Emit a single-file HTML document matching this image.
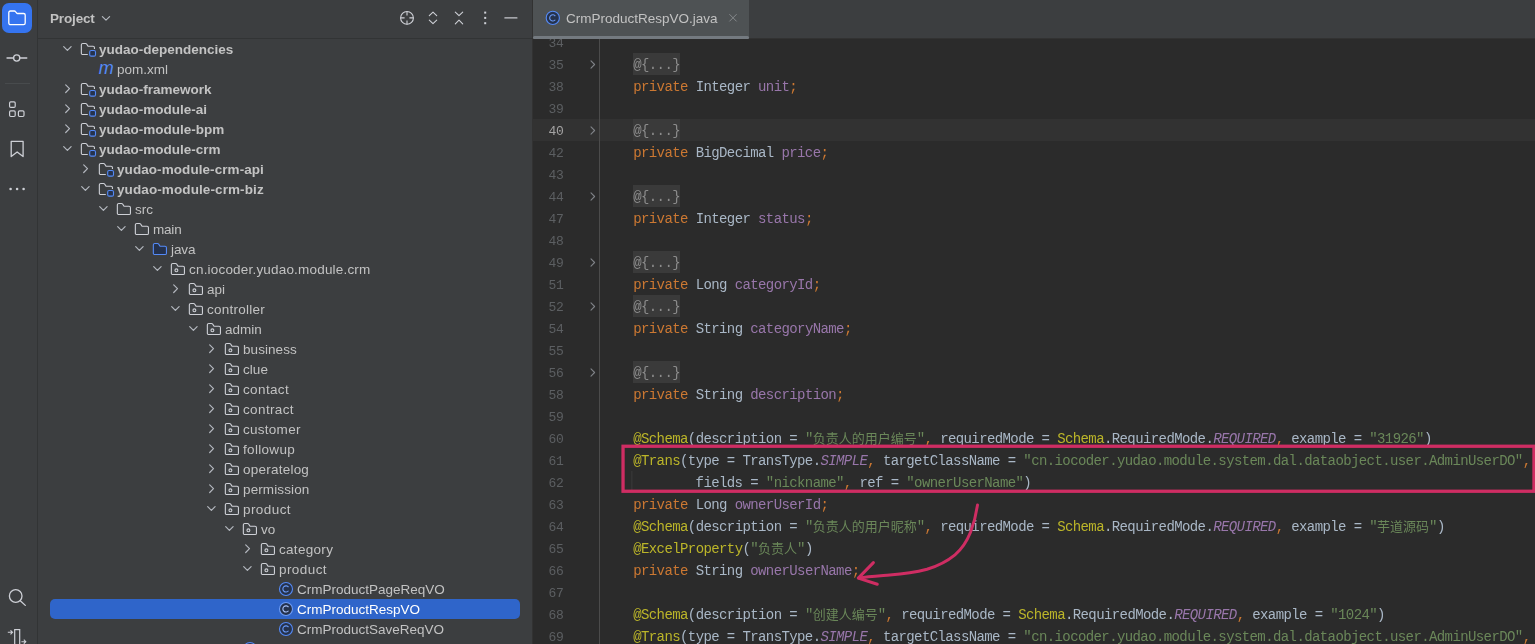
<!DOCTYPE html>
<html lang="zh">
<head>
<meta charset="utf-8">
<title>CrmProductRespVO.java</title>
<style>
*{box-sizing:border-box;margin:0;padding:0}
html,body{width:1535px;height:644px;overflow:hidden;background:#2b2b2b}
body{position:relative;font-family:"Liberation Sans","Noto Sans CJK SC",sans-serif;font-size:13px;color:#bbbbbb}
.abs{position:absolute;line-height:0}
svg{display:block}
#toolbar{position:absolute;left:0;top:0;width:37px;height:644px;background:#3c3e40}
#tbline{position:absolute;left:37px;top:0;width:1px;height:644px;background:#323435}
#panel{position:absolute;left:38px;top:0;width:494px;height:644px;background:#3c3e40}
#pline{position:absolute;left:532px;top:0;width:1px;height:644px;background:#323232}
#phead{position:absolute;left:38px;top:38px;width:494px;height:1px;background:#323435}
#projbtn{position:absolute;left:2px;top:3px;width:30px;height:30px;border-radius:7px;background:#3574f0}
.tt{position:absolute;height:20px;line-height:20px;white-space:pre;font-size:13.500px;color:#c2c2c2;will-change:transform}
.tt.b{font-weight:bold;color:#c3c3c3}
.tt.s{color:#ffffff}
.sel{position:absolute;left:50px;width:470px;height:20px;border-radius:5px;background:#2f65ca}
#title{position:absolute;left:50px;top:9px;letter-spacing:-0.150px;height:20px;line-height:20px;font-weight:bold;font-size:13.500px;color:#c2c2c2;will-change:transform}
#tabbar{position:absolute;left:533px;top:0;width:1002px;height:38px;background:#3c3e40}
#tabbarline{position:absolute;left:533px;top:38px;width:1002px;height:1px;background:#323232}
#tab{position:absolute;left:533px;top:0;width:216px;height:39px;background:#4e5254}
#tabul{position:absolute;left:533px;top:36px;width:216px;height:3px;background:#747a80;border-radius:1.500px}
#tabtxt{position:absolute;left:566px;top:9px;height:20px;line-height:20px;font-size:13.500px;color:#c2c2c2;white-space:pre;will-change:transform}
#editor{position:absolute;left:533px;top:39px;width:1002px;height:605px;background:#2b2b2b;overflow:hidden}
#ed{position:absolute;left:-533px;top:-39px;width:1535px;height:644px}
#gline{position:absolute;left:599px;top:39px;width:1px;height:605px;background:#4b4b4b}
.ln{position:absolute;left:533px;width:30.600px;letter-spacing:-0.300px;height:22px;line-height:22px;text-align:right;font-family:"Liberation Mono",monospace;font-size:13px;color:#5c5f62;will-change:transform}
.ln.cur{color:#a4a3a3}
.cl{position:absolute;left:601.800px;height:22px;line-height:22px;white-space:pre;font-family:"Liberation Mono","Noto Sans CJK SC",monospace;font-size:14px;letter-spacing:-0.600px;color:#a9b7c6;will-change:transform}
.z{font-size:13px;letter-spacing:0}
.foldbg{position:absolute;left:633px;width:47px;height:22px;background:#3a3a3a}
.curline{position:absolute;left:533px;width:1002px;height:22px;background:#323232}
.k{color:#cc7832}.f{color:#9876aa}.s{color:#6a8759}.a{color:#bbb529}.c{color:#cc7832}.i{color:#9876aa;font-style:italic}
.fold{color:#8c8c8c}
#redbox{position:absolute;left:621.100px;top:444.400px;width:914.300px;height:48.300px;border:3px solid #cf2d63}
#guide{position:absolute;left:631.400px;top:471px;width:1px;height:22px;background:#393939}
</style>
</head>
<body>
<div id="toolbar">
  <div id="projbtn"></div>
  <svg class="abs" style="left:7px;top:8px" width="21" height="21" viewBox="0 0 21 21" fill="none"><g transform="translate(0.4 0.3)"><path d="M3 2.700h3.900c.5 0 .9.200 1.200.600l1.200 1.500c.2.300.5.400.9.400h6c.9 0 1.600.7 1.600 1.600v8c0 .9-.7 1.600-1.600 1.600H3c-.9 0-1.600-.7-1.600-1.600V4.300c0-.9.700-1.600 1.600-1.600z" stroke="#ffffff" stroke-width="1.300"/></g></svg>
  <svg class="abs" style="left:6px;top:48px" width="23" height="21" viewBox="0 0 23 21" fill="none"><g transform="translate(0.0 0.0)"><circle cx="10.700" cy="10" r="3.100" stroke="#CED0D6" stroke-width="1.300"/><path d="M1 10h6.500M14 10h6.800" stroke="#CED0D6" stroke-width="1.300" stroke-linecap="round"/></g></svg>
  <div class="abs" style="left:5px;top:83px;width:25px;height:1px;background:#484b4d"></div>
  <svg class="abs" style="left:6px;top:99px" width="23" height="21" viewBox="0 0 23 21" fill="none"><g transform="translate(0.0 0.0)"><rect x="3.600" y="2.800" width="5.600" height="5.600" rx="1.200" stroke="#CED0D6" stroke-width="1.200"/><rect x="3.600" y="11.900" width="5.600" height="5.600" rx="1.200" stroke="#CED0D6" stroke-width="1.200"/><rect x="12.400" y="11.900" width="5.600" height="5.600" rx="1.200" stroke="#CED0D6" stroke-width="1.200"/></g></svg>
  <svg class="abs" style="left:7px;top:139px" width="21" height="21" viewBox="0 0 21 21" fill="none"><g transform="translate(0.0 0.0)"><path d="M4.200 2.300h11.900v15.300l-5.950-4.600-5.950 4.600z" stroke="#CED0D6" stroke-width="1.300" stroke-linejoin="round"/></g></svg>
  <svg class="abs" style="left:7px;top:184px" width="21" height="11" viewBox="0 0 21 11"><g transform="translate(0.0 0.0)"><circle cx="3.600" cy="5" r="1.300" fill="#CED0D6"/><circle cx="10.100" cy="5" r="1.300" fill="#CED0D6"/><circle cx="16.600" cy="5" r="1.300" fill="#CED0D6"/></g></svg>
  <svg class="abs" style="left:6px;top:586px" width="23" height="23" viewBox="0 0 23 23" fill="none"><g transform="translate(0.0 0.0)"><circle cx="9.700" cy="10" r="6.300" stroke="#CED0D6" stroke-width="1.300"/><path d="M14.300 14.700l5 4.700" stroke="#CED0D6" stroke-width="1.300" stroke-linecap="round"/></g></svg>
  <svg class="abs" style="left:6px;top:624px" width="23" height="21" viewBox="0 0 23 21" fill="none"><g transform="translate(0.0 0.0)"><rect x="8.700" y="5.600" width="5" height="16" stroke="#CED0D6" stroke-width="1.200"/><path d="M1.800 8.300h4.500M4.500 6.300l2 2-2 2M15.400 17.700h4.200M17.800 15.700l2 2-2 2" stroke="#CED0D6" stroke-width="1.100"/></g></svg>
</div>
<div id="tbline"></div>
<div id="panel"></div>
<div id="phead"></div>
<div id="pline"></div>
<div id="title">Project</div>
<svg class="abs" style="left:100px;top:12px" width="13" height="13" viewBox="0 0 13 13" fill="none"><g transform="translate(0.0 0.0)"><path d="M2.400 4.600l3.600 3.500 3.600-3.500" stroke="#B4B8BF" stroke-width="1.200" stroke-linecap="round" stroke-linejoin="round"/></g></svg>
<!-- header icons -->
<svg class="abs" style="left:399px;top:10px" width="17" height="17" viewBox="0 0 17 17" fill="none"><g transform="translate(0.0 0.0)"><circle cx="8" cy="7.900" r="6.400" stroke="#CED0D6" stroke-width="1.100"/><path d="M8 1.500v4M8 10.400v4M1.600 7.900h4M10.400 7.900h4" stroke="#CED0D6" stroke-width="1.100"/></g></svg>
<svg class="abs" style="left:425px;top:10px" width="17" height="17" viewBox="0 0 17 17" fill="none"><g transform="translate(0.0 0.0)"><path d="M4.300 5.600l3.700-3.500 3.700 3.500M4.300 10.100l3.700 3.500 3.700-3.500" stroke="#CED0D6" stroke-width="1.100" stroke-linecap="round" stroke-linejoin="round"/></g></svg>
<svg class="abs" style="left:451px;top:10px" width="17" height="17" viewBox="0 0 17 17" fill="none"><g transform="translate(0.0 0.0)"><path d="M4.300 2.100l3.700 3.600 3.700-3.600M4.300 13.800l3.700-3.700 3.700 3.700" stroke="#CED0D6" stroke-width="1.100" stroke-linecap="round" stroke-linejoin="round"/></g></svg>
<svg class="abs" style="left:477px;top:10px" width="17" height="17" viewBox="0 0 17 17"><g transform="translate(0.0 0.0)"><rect x="7.200" y="1.600" width="2" height="2" fill="#CED0D6"/><rect x="7.200" y="6.900" width="2" height="2" fill="#CED0D6"/><rect x="7.200" y="12.200" width="2" height="2" fill="#CED0D6"/></g></svg>
<svg class="abs" style="left:504px;top:17px" width="15" height="3" viewBox="0 0 15 3"><g transform="translate(0.3 0.25)"><rect x="0" y="0" width="13.200" height="1.300" rx="0.500" fill="#c6c8cd"/></g></svg>
<!-- tree -->
<svg class="abs" style="left:61px;top:42px" width="13" height="13" viewBox="0 0 13 13" fill="none"><g transform="translate(0.4 0.7)"><path d="M2.300 3.900l3.700 3.700 3.700-3.700" stroke="#B4B8BF" stroke-width="1.200" stroke-linecap="round" stroke-linejoin="round"/></g></svg><svg class="abs" style="left:79px;top:40px" width="19" height="19" viewBox="0 0 19 19" fill="none"><g transform="translate(0.5 0.7)"><path d="M8.300 13.850H3.250A1.400 1.400 0 0 1 1.850 12.450V4.250A1.400 1.400 0 0 1 3.250 2.850H6.100C6.500 2.850 6.900 3.050 7.150 3.350L8.300 5.150C8.500 5.450 8.800 5.600 9.150 5.600H13.550A1.400 1.400 0 0 1 14.950 7V8.300" stroke="#CED0D6" stroke-width="1.100"/><rect x="10.200" y="9.800" width="5.800" height="5.600" rx="1.400" fill="#25324D" stroke="#548AF7" stroke-width="1.100"/></g></svg><div class="tt b" style="left:99.4px;top:40px">yudao-dependencies</div>
<svg class="abs" style="left:97px;top:60px" width="19" height="19" viewBox="0 0 19 19"><g transform="translate(0.5 0.7)"><text x="1.200" y="13.500" font-family="Liberation Sans, sans-serif" font-style="italic" font-size="18" fill="#548AF7">m</text></g></svg><div class="tt" style="left:117.4px;top:60px">pom.xml</div>
<svg class="abs" style="left:61px;top:82px" width="13" height="13" viewBox="0 0 13 13" fill="none"><g transform="translate(0.4 0.7)"><path d="M4.300 2.200l3.800 3.800-3.800 3.800" stroke="#B4B8BF" stroke-width="1.200" stroke-linecap="round" stroke-linejoin="round"/></g></svg><svg class="abs" style="left:79px;top:80px" width="19" height="19" viewBox="0 0 19 19" fill="none"><g transform="translate(0.5 0.7)"><path d="M8.300 13.850H3.250A1.400 1.400 0 0 1 1.850 12.450V4.250A1.400 1.400 0 0 1 3.250 2.850H6.100C6.500 2.850 6.900 3.050 7.150 3.350L8.300 5.150C8.500 5.450 8.800 5.600 9.150 5.600H13.550A1.400 1.400 0 0 1 14.950 7V8.300" stroke="#CED0D6" stroke-width="1.100"/><rect x="10.200" y="9.800" width="5.800" height="5.600" rx="1.400" fill="#25324D" stroke="#548AF7" stroke-width="1.100"/></g></svg><div class="tt b" style="left:99.4px;top:80px">yudao-framework</div>
<svg class="abs" style="left:61px;top:102px" width="13" height="13" viewBox="0 0 13 13" fill="none"><g transform="translate(0.4 0.7)"><path d="M4.300 2.200l3.800 3.800-3.800 3.800" stroke="#B4B8BF" stroke-width="1.200" stroke-linecap="round" stroke-linejoin="round"/></g></svg><svg class="abs" style="left:79px;top:100px" width="19" height="19" viewBox="0 0 19 19" fill="none"><g transform="translate(0.5 0.7)"><path d="M8.300 13.850H3.250A1.400 1.400 0 0 1 1.850 12.450V4.250A1.400 1.400 0 0 1 3.250 2.850H6.100C6.500 2.850 6.900 3.050 7.150 3.350L8.300 5.150C8.500 5.450 8.800 5.600 9.150 5.600H13.550A1.400 1.400 0 0 1 14.950 7V8.300" stroke="#CED0D6" stroke-width="1.100"/><rect x="10.200" y="9.800" width="5.800" height="5.600" rx="1.400" fill="#25324D" stroke="#548AF7" stroke-width="1.100"/></g></svg><div class="tt b" style="left:99.4px;top:100px">yudao-module-ai</div>
<svg class="abs" style="left:61px;top:122px" width="13" height="13" viewBox="0 0 13 13" fill="none"><g transform="translate(0.4 0.7)"><path d="M4.300 2.200l3.800 3.800-3.800 3.800" stroke="#B4B8BF" stroke-width="1.200" stroke-linecap="round" stroke-linejoin="round"/></g></svg><svg class="abs" style="left:79px;top:120px" width="19" height="19" viewBox="0 0 19 19" fill="none"><g transform="translate(0.5 0.7)"><path d="M8.300 13.850H3.250A1.400 1.400 0 0 1 1.850 12.450V4.250A1.400 1.400 0 0 1 3.250 2.850H6.100C6.500 2.850 6.900 3.050 7.150 3.350L8.300 5.150C8.500 5.450 8.800 5.600 9.150 5.600H13.550A1.400 1.400 0 0 1 14.950 7V8.300" stroke="#CED0D6" stroke-width="1.100"/><rect x="10.200" y="9.800" width="5.800" height="5.600" rx="1.400" fill="#25324D" stroke="#548AF7" stroke-width="1.100"/></g></svg><div class="tt b" style="left:99.4px;top:120px">yudao-module-bpm</div>
<svg class="abs" style="left:61px;top:142px" width="13" height="13" viewBox="0 0 13 13" fill="none"><g transform="translate(0.4 0.7)"><path d="M2.300 3.900l3.700 3.700 3.700-3.700" stroke="#B4B8BF" stroke-width="1.200" stroke-linecap="round" stroke-linejoin="round"/></g></svg><svg class="abs" style="left:79px;top:140px" width="19" height="19" viewBox="0 0 19 19" fill="none"><g transform="translate(0.5 0.7)"><path d="M8.300 13.850H3.250A1.400 1.400 0 0 1 1.850 12.450V4.250A1.400 1.400 0 0 1 3.250 2.850H6.100C6.500 2.850 6.900 3.050 7.150 3.350L8.300 5.150C8.500 5.450 8.800 5.600 9.150 5.600H13.550A1.400 1.400 0 0 1 14.950 7V8.300" stroke="#CED0D6" stroke-width="1.100"/><rect x="10.200" y="9.800" width="5.800" height="5.600" rx="1.400" fill="#25324D" stroke="#548AF7" stroke-width="1.100"/></g></svg><div class="tt b" style="left:99.4px;top:140px">yudao-module-crm</div>
<svg class="abs" style="left:79px;top:162px" width="13" height="13" viewBox="0 0 13 13" fill="none"><g transform="translate(0.4 0.7)"><path d="M4.300 2.200l3.800 3.800-3.800 3.800" stroke="#B4B8BF" stroke-width="1.200" stroke-linecap="round" stroke-linejoin="round"/></g></svg><svg class="abs" style="left:97px;top:160px" width="19" height="19" viewBox="0 0 19 19" fill="none"><g transform="translate(0.5 0.7)"><path d="M8.300 13.850H3.250A1.400 1.400 0 0 1 1.850 12.450V4.250A1.400 1.400 0 0 1 3.250 2.850H6.100C6.500 2.850 6.900 3.050 7.150 3.350L8.300 5.150C8.500 5.450 8.800 5.600 9.150 5.600H13.550A1.400 1.400 0 0 1 14.950 7V8.300" stroke="#CED0D6" stroke-width="1.100"/><rect x="10.200" y="9.800" width="5.800" height="5.600" rx="1.400" fill="#25324D" stroke="#548AF7" stroke-width="1.100"/></g></svg><div class="tt b" style="left:117.4px;top:160px;letter-spacing:0.07px">yudao-module-crm-api</div>
<svg class="abs" style="left:79px;top:182px" width="13" height="13" viewBox="0 0 13 13" fill="none"><g transform="translate(0.4 0.7)"><path d="M2.300 3.900l3.700 3.700 3.700-3.700" stroke="#B4B8BF" stroke-width="1.200" stroke-linecap="round" stroke-linejoin="round"/></g></svg><svg class="abs" style="left:97px;top:180px" width="19" height="19" viewBox="0 0 19 19" fill="none"><g transform="translate(0.5 0.7)"><path d="M8.300 13.850H3.250A1.400 1.400 0 0 1 1.850 12.450V4.250A1.400 1.400 0 0 1 3.250 2.850H6.100C6.500 2.850 6.900 3.050 7.150 3.350L8.300 5.150C8.500 5.450 8.800 5.600 9.150 5.600H13.550A1.400 1.400 0 0 1 14.950 7V8.300" stroke="#CED0D6" stroke-width="1.100"/><rect x="10.200" y="9.800" width="5.800" height="5.600" rx="1.400" fill="#25324D" stroke="#548AF7" stroke-width="1.100"/></g></svg><div class="tt b" style="left:117.4px;top:180px;letter-spacing:0.10px">yudao-module-crm-biz</div>
<svg class="abs" style="left:97px;top:202px" width="13" height="13" viewBox="0 0 13 13" fill="none"><g transform="translate(0.4 0.7)"><path d="M2.300 3.900l3.700 3.700 3.700-3.700" stroke="#B4B8BF" stroke-width="1.200" stroke-linecap="round" stroke-linejoin="round"/></g></svg><svg class="abs" style="left:115px;top:200px" width="19" height="19" viewBox="0 0 19 19" fill="none"><g transform="translate(0.5 0.7)"><path d="M3.250 2.850H6.100C6.500 2.850 6.900 3.050 7.150 3.350L8.300 5.150C8.500 5.450 8.800 5.600 9.150 5.600H13.550A1.400 1.400 0 0 1 14.950 7V12.450A1.400 1.400 0 0 1 13.550 13.850H3.250A1.400 1.400 0 0 1 1.850 12.450V4.250A1.400 1.400 0 0 1 3.250 2.850Z" fill="#404346" stroke="#CED0D6" stroke-width="1.100"/></g></svg><div class="tt" style="left:135.4px;top:200px">src</div>
<svg class="abs" style="left:115px;top:222px" width="13" height="13" viewBox="0 0 13 13" fill="none"><g transform="translate(0.4 0.7)"><path d="M2.300 3.900l3.700 3.700 3.700-3.700" stroke="#B4B8BF" stroke-width="1.200" stroke-linecap="round" stroke-linejoin="round"/></g></svg><svg class="abs" style="left:133px;top:220px" width="19" height="19" viewBox="0 0 19 19" fill="none"><g transform="translate(0.5 0.7)"><path d="M3.250 2.850H6.100C6.500 2.850 6.900 3.050 7.150 3.350L8.300 5.150C8.500 5.450 8.800 5.600 9.150 5.600H13.550A1.400 1.400 0 0 1 14.950 7V12.450A1.400 1.400 0 0 1 13.550 13.850H3.250A1.400 1.400 0 0 1 1.850 12.450V4.250A1.400 1.400 0 0 1 3.250 2.850Z" fill="#404346" stroke="#CED0D6" stroke-width="1.100"/></g></svg><div class="tt" style="left:153.4px;top:220px;letter-spacing:-0.19px">main</div>
<svg class="abs" style="left:133px;top:242px" width="13" height="13" viewBox="0 0 13 13" fill="none"><g transform="translate(0.4 0.7)"><path d="M2.300 3.900l3.700 3.700 3.700-3.700" stroke="#B4B8BF" stroke-width="1.200" stroke-linecap="round" stroke-linejoin="round"/></g></svg><svg class="abs" style="left:151px;top:240px" width="19" height="19" viewBox="0 0 19 19" fill="none"><g transform="translate(0.5 0.7)"><path d="M3.250 2.850H6.100C6.500 2.850 6.900 3.050 7.150 3.350L8.300 5.150C8.500 5.450 8.800 5.600 9.150 5.600H13.550A1.400 1.400 0 0 1 14.950 7V12.450A1.400 1.400 0 0 1 13.550 13.850H3.250A1.400 1.400 0 0 1 1.850 12.450V4.250A1.400 1.400 0 0 1 3.250 2.850Z" fill="#25324D" stroke="#548AF7" stroke-width="1.100"/></g></svg><div class="tt" style="left:171.4px;top:240px;letter-spacing:-0.12px">java</div>
<svg class="abs" style="left:151px;top:262px" width="13" height="13" viewBox="0 0 13 13" fill="none"><g transform="translate(0.4 0.7)"><path d="M2.300 3.900l3.700 3.700 3.700-3.700" stroke="#B4B8BF" stroke-width="1.200" stroke-linecap="round" stroke-linejoin="round"/></g></svg><svg class="abs" style="left:169px;top:260px" width="19" height="19" viewBox="0 0 19 19" fill="none"><g transform="translate(0.5 0.7)"><path d="M3.250 2.850H6.100C6.500 2.850 6.900 3.050 7.150 3.350L8.300 5.150C8.500 5.450 8.800 5.600 9.150 5.600H13.550A1.400 1.400 0 0 1 14.950 7V12.450A1.400 1.400 0 0 1 13.550 13.850H3.250A1.400 1.400 0 0 1 1.850 12.450V4.250A1.400 1.400 0 0 1 3.250 2.850Z" fill="#404346" stroke="#CED0D6" stroke-width="1.100"/><circle cx="6.900" cy="9.600" r="1.450" stroke="#CED0D6" stroke-width="1.100"/></g></svg><div class="tt" style="left:189.4px;top:260px;letter-spacing:0.19px">cn.iocoder.yudao.module.crm</div>
<svg class="abs" style="left:169px;top:282px" width="13" height="13" viewBox="0 0 13 13" fill="none"><g transform="translate(0.4 0.7)"><path d="M4.300 2.200l3.800 3.800-3.800 3.800" stroke="#B4B8BF" stroke-width="1.200" stroke-linecap="round" stroke-linejoin="round"/></g></svg><svg class="abs" style="left:187px;top:280px" width="19" height="19" viewBox="0 0 19 19" fill="none"><g transform="translate(0.5 0.7)"><path d="M3.250 2.850H6.100C6.500 2.850 6.900 3.050 7.150 3.350L8.300 5.150C8.500 5.450 8.800 5.600 9.150 5.600H13.550A1.400 1.400 0 0 1 14.950 7V12.450A1.400 1.400 0 0 1 13.550 13.850H3.250A1.400 1.400 0 0 1 1.850 12.450V4.250A1.400 1.400 0 0 1 3.250 2.850Z" fill="#404346" stroke="#CED0D6" stroke-width="1.100"/><circle cx="6.900" cy="9.600" r="1.450" stroke="#CED0D6" stroke-width="1.100"/></g></svg><div class="tt" style="left:207.4px;top:280px">api</div>
<svg class="abs" style="left:169px;top:302px" width="13" height="13" viewBox="0 0 13 13" fill="none"><g transform="translate(0.4 0.7)"><path d="M2.300 3.900l3.700 3.700 3.700-3.700" stroke="#B4B8BF" stroke-width="1.200" stroke-linecap="round" stroke-linejoin="round"/></g></svg><svg class="abs" style="left:187px;top:300px" width="19" height="19" viewBox="0 0 19 19" fill="none"><g transform="translate(0.5 0.7)"><path d="M3.250 2.850H6.100C6.500 2.850 6.900 3.050 7.150 3.350L8.300 5.150C8.500 5.450 8.800 5.600 9.150 5.600H13.550A1.400 1.400 0 0 1 14.950 7V12.450A1.400 1.400 0 0 1 13.550 13.850H3.250A1.400 1.400 0 0 1 1.850 12.450V4.250A1.400 1.400 0 0 1 3.250 2.850Z" fill="#404346" stroke="#CED0D6" stroke-width="1.100"/><circle cx="6.900" cy="9.600" r="1.450" stroke="#CED0D6" stroke-width="1.100"/></g></svg><div class="tt" style="left:207.4px;top:300px;letter-spacing:0.25px">controller</div>
<svg class="abs" style="left:187px;top:322px" width="13" height="13" viewBox="0 0 13 13" fill="none"><g transform="translate(0.4 0.7)"><path d="M2.300 3.900l3.700 3.700 3.700-3.700" stroke="#B4B8BF" stroke-width="1.200" stroke-linecap="round" stroke-linejoin="round"/></g></svg><svg class="abs" style="left:205px;top:320px" width="19" height="19" viewBox="0 0 19 19" fill="none"><g transform="translate(0.5 0.7)"><path d="M3.250 2.850H6.100C6.500 2.850 6.900 3.050 7.150 3.350L8.300 5.150C8.500 5.450 8.800 5.600 9.150 5.600H13.550A1.400 1.400 0 0 1 14.950 7V12.450A1.400 1.400 0 0 1 13.550 13.850H3.250A1.400 1.400 0 0 1 1.850 12.450V4.250A1.400 1.400 0 0 1 3.250 2.850Z" fill="#404346" stroke="#CED0D6" stroke-width="1.100"/><circle cx="6.900" cy="9.600" r="1.450" stroke="#CED0D6" stroke-width="1.100"/></g></svg><div class="tt" style="left:225.4px;top:320px">admin</div>
<svg class="abs" style="left:205px;top:342px" width="13" height="13" viewBox="0 0 13 13" fill="none"><g transform="translate(0.4 0.7)"><path d="M4.300 2.200l3.800 3.800-3.800 3.800" stroke="#B4B8BF" stroke-width="1.200" stroke-linecap="round" stroke-linejoin="round"/></g></svg><svg class="abs" style="left:223px;top:340px" width="19" height="19" viewBox="0 0 19 19" fill="none"><g transform="translate(0.5 0.7)"><path d="M3.250 2.850H6.100C6.500 2.850 6.900 3.050 7.150 3.350L8.300 5.150C8.500 5.450 8.800 5.600 9.150 5.600H13.550A1.400 1.400 0 0 1 14.950 7V12.450A1.400 1.400 0 0 1 13.550 13.850H3.250A1.400 1.400 0 0 1 1.850 12.450V4.250A1.400 1.400 0 0 1 3.250 2.850Z" fill="#404346" stroke="#CED0D6" stroke-width="1.100"/><circle cx="6.900" cy="9.600" r="1.450" stroke="#CED0D6" stroke-width="1.100"/></g></svg><div class="tt" style="left:243.4px;top:340px;letter-spacing:0.06px">business</div>
<svg class="abs" style="left:205px;top:362px" width="13" height="13" viewBox="0 0 13 13" fill="none"><g transform="translate(0.4 0.7)"><path d="M4.300 2.200l3.800 3.800-3.800 3.800" stroke="#B4B8BF" stroke-width="1.200" stroke-linecap="round" stroke-linejoin="round"/></g></svg><svg class="abs" style="left:223px;top:360px" width="19" height="19" viewBox="0 0 19 19" fill="none"><g transform="translate(0.5 0.7)"><path d="M3.250 2.850H6.100C6.500 2.850 6.900 3.050 7.150 3.350L8.300 5.150C8.500 5.450 8.800 5.600 9.150 5.600H13.550A1.400 1.400 0 0 1 14.950 7V12.450A1.400 1.400 0 0 1 13.550 13.850H3.250A1.400 1.400 0 0 1 1.850 12.450V4.250A1.400 1.400 0 0 1 3.250 2.850Z" fill="#404346" stroke="#CED0D6" stroke-width="1.100"/><circle cx="6.900" cy="9.600" r="1.450" stroke="#CED0D6" stroke-width="1.100"/></g></svg><div class="tt" style="left:243.4px;top:360px;letter-spacing:0.06px">clue</div>
<svg class="abs" style="left:205px;top:382px" width="13" height="13" viewBox="0 0 13 13" fill="none"><g transform="translate(0.4 0.7)"><path d="M4.300 2.200l3.800 3.800-3.800 3.800" stroke="#B4B8BF" stroke-width="1.200" stroke-linecap="round" stroke-linejoin="round"/></g></svg><svg class="abs" style="left:223px;top:380px" width="19" height="19" viewBox="0 0 19 19" fill="none"><g transform="translate(0.5 0.7)"><path d="M3.250 2.850H6.100C6.500 2.850 6.900 3.050 7.150 3.350L8.300 5.150C8.500 5.450 8.800 5.600 9.150 5.600H13.550A1.400 1.400 0 0 1 14.950 7V12.450A1.400 1.400 0 0 1 13.550 13.850H3.250A1.400 1.400 0 0 1 1.850 12.450V4.250A1.400 1.400 0 0 1 3.250 2.850Z" fill="#404346" stroke="#CED0D6" stroke-width="1.100"/><circle cx="6.900" cy="9.600" r="1.450" stroke="#CED0D6" stroke-width="1.100"/></g></svg><div class="tt" style="left:243.4px;top:380px;letter-spacing:0.37px">contact</div>
<svg class="abs" style="left:205px;top:402px" width="13" height="13" viewBox="0 0 13 13" fill="none"><g transform="translate(0.4 0.7)"><path d="M4.300 2.200l3.800 3.800-3.800 3.800" stroke="#B4B8BF" stroke-width="1.200" stroke-linecap="round" stroke-linejoin="round"/></g></svg><svg class="abs" style="left:223px;top:400px" width="19" height="19" viewBox="0 0 19 19" fill="none"><g transform="translate(0.5 0.7)"><path d="M3.250 2.850H6.100C6.500 2.850 6.900 3.050 7.150 3.350L8.300 5.150C8.500 5.450 8.800 5.600 9.150 5.600H13.550A1.400 1.400 0 0 1 14.950 7V12.450A1.400 1.400 0 0 1 13.550 13.850H3.250A1.400 1.400 0 0 1 1.850 12.450V4.250A1.400 1.400 0 0 1 3.250 2.850Z" fill="#404346" stroke="#CED0D6" stroke-width="1.100"/><circle cx="6.900" cy="9.600" r="1.450" stroke="#CED0D6" stroke-width="1.100"/></g></svg><div class="tt" style="left:243.4px;top:400px;letter-spacing:0.37px">contract</div>
<svg class="abs" style="left:205px;top:422px" width="13" height="13" viewBox="0 0 13 13" fill="none"><g transform="translate(0.4 0.7)"><path d="M4.300 2.200l3.800 3.800-3.800 3.800" stroke="#B4B8BF" stroke-width="1.200" stroke-linecap="round" stroke-linejoin="round"/></g></svg><svg class="abs" style="left:223px;top:420px" width="19" height="19" viewBox="0 0 19 19" fill="none"><g transform="translate(0.5 0.7)"><path d="M3.250 2.850H6.100C6.500 2.850 6.900 3.050 7.150 3.350L8.300 5.150C8.500 5.450 8.800 5.600 9.150 5.600H13.550A1.400 1.400 0 0 1 14.950 7V12.450A1.400 1.400 0 0 1 13.550 13.850H3.250A1.400 1.400 0 0 1 1.850 12.450V4.250A1.400 1.400 0 0 1 3.250 2.850Z" fill="#404346" stroke="#CED0D6" stroke-width="1.100"/><circle cx="6.900" cy="9.600" r="1.450" stroke="#CED0D6" stroke-width="1.100"/></g></svg><div class="tt" style="left:243.4px;top:420px;letter-spacing:0.27px">customer</div>
<svg class="abs" style="left:205px;top:442px" width="13" height="13" viewBox="0 0 13 13" fill="none"><g transform="translate(0.4 0.7)"><path d="M4.300 2.200l3.800 3.800-3.800 3.800" stroke="#B4B8BF" stroke-width="1.200" stroke-linecap="round" stroke-linejoin="round"/></g></svg><svg class="abs" style="left:223px;top:440px" width="19" height="19" viewBox="0 0 19 19" fill="none"><g transform="translate(0.5 0.7)"><path d="M3.250 2.850H6.100C6.500 2.850 6.900 3.050 7.150 3.350L8.300 5.150C8.500 5.450 8.800 5.600 9.150 5.600H13.550A1.400 1.400 0 0 1 14.950 7V12.450A1.400 1.400 0 0 1 13.550 13.850H3.250A1.400 1.400 0 0 1 1.850 12.450V4.250A1.400 1.400 0 0 1 3.250 2.850Z" fill="#404346" stroke="#CED0D6" stroke-width="1.100"/><circle cx="6.900" cy="9.600" r="1.450" stroke="#CED0D6" stroke-width="1.100"/></g></svg><div class="tt" style="left:243.4px;top:440px;letter-spacing:0.32px">followup</div>
<svg class="abs" style="left:205px;top:462px" width="13" height="13" viewBox="0 0 13 13" fill="none"><g transform="translate(0.4 0.7)"><path d="M4.300 2.200l3.800 3.800-3.800 3.800" stroke="#B4B8BF" stroke-width="1.200" stroke-linecap="round" stroke-linejoin="round"/></g></svg><svg class="abs" style="left:223px;top:460px" width="19" height="19" viewBox="0 0 19 19" fill="none"><g transform="translate(0.5 0.7)"><path d="M3.250 2.850H6.100C6.500 2.850 6.900 3.050 7.150 3.350L8.300 5.150C8.500 5.450 8.800 5.600 9.150 5.600H13.550A1.400 1.400 0 0 1 14.950 7V12.450A1.400 1.400 0 0 1 13.550 13.850H3.250A1.400 1.400 0 0 1 1.850 12.450V4.250A1.400 1.400 0 0 1 3.250 2.850Z" fill="#404346" stroke="#CED0D6" stroke-width="1.100"/><circle cx="6.900" cy="9.600" r="1.450" stroke="#CED0D6" stroke-width="1.100"/></g></svg><div class="tt" style="left:243.4px;top:460px;letter-spacing:0.23px">operatelog</div>
<svg class="abs" style="left:205px;top:482px" width="13" height="13" viewBox="0 0 13 13" fill="none"><g transform="translate(0.4 0.7)"><path d="M4.300 2.200l3.800 3.800-3.800 3.800" stroke="#B4B8BF" stroke-width="1.200" stroke-linecap="round" stroke-linejoin="round"/></g></svg><svg class="abs" style="left:223px;top:480px" width="19" height="19" viewBox="0 0 19 19" fill="none"><g transform="translate(0.5 0.7)"><path d="M3.250 2.850H6.100C6.500 2.850 6.900 3.050 7.150 3.350L8.300 5.150C8.500 5.450 8.800 5.600 9.150 5.600H13.550A1.400 1.400 0 0 1 14.950 7V12.450A1.400 1.400 0 0 1 13.550 13.850H3.250A1.400 1.400 0 0 1 1.850 12.450V4.250A1.400 1.400 0 0 1 3.250 2.850Z" fill="#404346" stroke="#CED0D6" stroke-width="1.100"/><circle cx="6.900" cy="9.600" r="1.450" stroke="#CED0D6" stroke-width="1.100"/></g></svg><div class="tt" style="left:243.4px;top:480px;letter-spacing:0.12px">permission</div>
<svg class="abs" style="left:205px;top:502px" width="13" height="13" viewBox="0 0 13 13" fill="none"><g transform="translate(0.4 0.7)"><path d="M2.300 3.900l3.700 3.700 3.700-3.700" stroke="#B4B8BF" stroke-width="1.200" stroke-linecap="round" stroke-linejoin="round"/></g></svg><svg class="abs" style="left:223px;top:500px" width="19" height="19" viewBox="0 0 19 19" fill="none"><g transform="translate(0.5 0.7)"><path d="M3.250 2.850H6.100C6.500 2.850 6.900 3.050 7.150 3.350L8.300 5.150C8.500 5.450 8.800 5.600 9.150 5.600H13.550A1.400 1.400 0 0 1 14.950 7V12.450A1.400 1.400 0 0 1 13.550 13.850H3.250A1.400 1.400 0 0 1 1.850 12.450V4.250A1.400 1.400 0 0 1 3.250 2.850Z" fill="#404346" stroke="#CED0D6" stroke-width="1.100"/><circle cx="6.900" cy="9.600" r="1.450" stroke="#CED0D6" stroke-width="1.100"/></g></svg><div class="tt" style="left:243.4px;top:500px;letter-spacing:0.42px">product</div>
<svg class="abs" style="left:223px;top:522px" width="13" height="13" viewBox="0 0 13 13" fill="none"><g transform="translate(0.4 0.7)"><path d="M2.300 3.900l3.700 3.700 3.700-3.700" stroke="#B4B8BF" stroke-width="1.200" stroke-linecap="round" stroke-linejoin="round"/></g></svg><svg class="abs" style="left:241px;top:520px" width="19" height="19" viewBox="0 0 19 19" fill="none"><g transform="translate(0.5 0.7)"><path d="M3.250 2.850H6.100C6.500 2.850 6.900 3.050 7.150 3.350L8.300 5.150C8.500 5.450 8.800 5.600 9.150 5.600H13.550A1.400 1.400 0 0 1 14.950 7V12.450A1.400 1.400 0 0 1 13.550 13.850H3.250A1.400 1.400 0 0 1 1.850 12.450V4.250A1.400 1.400 0 0 1 3.250 2.850Z" fill="#404346" stroke="#CED0D6" stroke-width="1.100"/><circle cx="6.900" cy="9.600" r="1.450" stroke="#CED0D6" stroke-width="1.100"/></g></svg><div class="tt" style="left:261.4px;top:520px;letter-spacing:0.07px">vo</div>
<svg class="abs" style="left:241px;top:542px" width="13" height="13" viewBox="0 0 13 13" fill="none"><g transform="translate(0.4 0.7)"><path d="M4.300 2.200l3.800 3.800-3.800 3.800" stroke="#B4B8BF" stroke-width="1.200" stroke-linecap="round" stroke-linejoin="round"/></g></svg><svg class="abs" style="left:259px;top:540px" width="19" height="19" viewBox="0 0 19 19" fill="none"><g transform="translate(0.5 0.7)"><path d="M3.250 2.850H6.100C6.500 2.850 6.900 3.050 7.150 3.350L8.300 5.150C8.500 5.450 8.800 5.600 9.150 5.600H13.550A1.400 1.400 0 0 1 14.950 7V12.450A1.400 1.400 0 0 1 13.550 13.850H3.250A1.400 1.400 0 0 1 1.850 12.450V4.250A1.400 1.400 0 0 1 3.250 2.850Z" fill="#404346" stroke="#CED0D6" stroke-width="1.100"/><circle cx="6.900" cy="9.600" r="1.450" stroke="#CED0D6" stroke-width="1.100"/></g></svg><div class="tt" style="left:279.4px;top:540px;letter-spacing:0.30px">category</div>
<svg class="abs" style="left:241px;top:562px" width="13" height="13" viewBox="0 0 13 13" fill="none"><g transform="translate(0.4 0.7)"><path d="M2.300 3.900l3.700 3.700 3.700-3.700" stroke="#B4B8BF" stroke-width="1.200" stroke-linecap="round" stroke-linejoin="round"/></g></svg><svg class="abs" style="left:259px;top:560px" width="19" height="19" viewBox="0 0 19 19" fill="none"><g transform="translate(0.5 0.7)"><path d="M3.250 2.850H6.100C6.500 2.850 6.900 3.050 7.150 3.350L8.300 5.150C8.500 5.450 8.800 5.600 9.150 5.600H13.550A1.400 1.400 0 0 1 14.950 7V12.450A1.400 1.400 0 0 1 13.550 13.850H3.250A1.400 1.400 0 0 1 1.850 12.450V4.250A1.400 1.400 0 0 1 3.250 2.850Z" fill="#404346" stroke="#CED0D6" stroke-width="1.100"/><circle cx="6.900" cy="9.600" r="1.450" stroke="#CED0D6" stroke-width="1.100"/></g></svg><div class="tt" style="left:279.4px;top:560px;letter-spacing:0.42px">product</div>
<svg class="abs" style="left:277px;top:580px" width="19" height="19" viewBox="0 0 19 19" fill="none"><g transform="translate(0.5 0.7)"><circle cx="8.500" cy="8.250" r="6.500" fill="#25324D" stroke="#548AF7" stroke-width="1.100"/><path d="M11 6.450A3.100 3.100 0 1 0 11 10.050" stroke="#6b9bf8" stroke-width="1.100" fill="none"/></g></svg><div class="tt" style="left:297.4px;top:580px">CrmProductPageReqVO</div>
<div class="sel" style="top:599px"></div><svg class="abs" style="left:277px;top:600px" width="19" height="19" viewBox="0 0 19 19" fill="none"><g transform="translate(0.5 0.7)"><circle cx="8.500" cy="8.250" r="6.500" fill="#25324D" stroke="#6e9df8" stroke-width="1.100"/><path d="M11 6.450A3.100 3.100 0 1 0 11 10.050" stroke="#a8c2fa" stroke-width="1.100" fill="none"/></g></svg><div class="tt s" style="left:297.4px;top:600px">CrmProductRespVO</div>
<svg class="abs" style="left:277px;top:620px" width="19" height="19" viewBox="0 0 19 19" fill="none"><g transform="translate(0.5 0.7)"><circle cx="8.500" cy="8.250" r="6.500" fill="#25324D" stroke="#548AF7" stroke-width="1.100"/><path d="M11 6.450A3.100 3.100 0 1 0 11 10.050" stroke="#6b9bf8" stroke-width="1.100" fill="none"/></g></svg><div class="tt" style="left:297.4px;top:620px">CrmProductSaveReqVO</div>
<svg class="abs" style="left:241px;top:640px" width="19" height="19" viewBox="0 0 19 19" fill="none"><g transform="translate(0.5 0.7)"><circle cx="8.500" cy="8.250" r="6.500" fill="#25324D" stroke="#548AF7" stroke-width="1.100"/><path d="M11 6.450A3.100 3.100 0 1 0 11 10.050" stroke="#6b9bf8" stroke-width="1.100" fill="none"/></g></svg>
<!-- tab bar -->
<div id="tabbar"></div>
<div id="tabbarline"></div>
<div id="tab"></div>
<div id="tabul"></div>
<svg class="abs" style="left:543px;top:8px" width="19" height="19" viewBox="0 0 19 19" fill="none"><g transform="translate(0.8 0.9)"><circle cx="9" cy="9" r="6.600" fill="#25324D" stroke="#548AF7" stroke-width="1.100"/><path d="M11.500 7.200A3.100 3.100 0 1 0 11.500 10.800" stroke="#6b9bf8" stroke-width="1.100" fill="none"/></g></svg>
<div id="tabtxt">CrmProductRespVO.java</div>
<svg class="abs" style="left:727px;top:11px" width="13" height="13" viewBox="0 0 13 13" fill="none"><g transform="translate(0.0 0.8)"><path d="M2.400 2.400l7.200 7.200M9.600 2.400l-7.200 7.200" stroke="#85888b" stroke-width="1"/></g></svg>
<!-- editor -->
<div id="editor"><div id="ed">
<div class="ln" style="top:33px">34</div>
<div class="ln" style="top:55px">35</div>
<div class="foldbg" style="top:53px"></div>
<svg class="abs" style="left:586px;top:58px" width="13" height="13" viewBox="0 0 13 13" fill="none"><g transform="translate(0.7 0.5)"><path d="M4.300 2.400l3.600 3.600-3.600 3.600" stroke="#7F8388" stroke-width="1.100" stroke-linecap="round" stroke-linejoin="round"/></g></svg>
<div class="cl" style="top:54px">    <span class="fold">@{...}</span></div>
<div class="ln" style="top:77px">38</div>
<div class="cl" style="top:76px">    <span class="k">private</span> Integer <span class="f">unit</span><span class="c">;</span></div>
<div class="ln" style="top:99px">39</div>
<div class="curline" style="top:119px"></div>
<div class="ln cur" style="top:121px">40</div>
<div class="foldbg" style="top:119px"></div>
<svg class="abs" style="left:586px;top:124px" width="13" height="13" viewBox="0 0 13 13" fill="none"><g transform="translate(0.7 0.5)"><path d="M4.300 2.400l3.600 3.600-3.600 3.600" stroke="#7F8388" stroke-width="1.100" stroke-linecap="round" stroke-linejoin="round"/></g></svg>
<div class="cl" style="top:120px">    <span class="fold">@{...}</span></div>
<div class="ln" style="top:143px">42</div>
<div class="cl" style="top:142px">    <span class="k">private</span> BigDecimal <span class="f">price</span><span class="c">;</span></div>
<div class="ln" style="top:165px">43</div>
<div class="ln" style="top:187px">44</div>
<div class="foldbg" style="top:185px"></div>
<svg class="abs" style="left:586px;top:190px" width="13" height="13" viewBox="0 0 13 13" fill="none"><g transform="translate(0.7 0.5)"><path d="M4.300 2.400l3.600 3.600-3.600 3.600" stroke="#7F8388" stroke-width="1.100" stroke-linecap="round" stroke-linejoin="round"/></g></svg>
<div class="cl" style="top:186px">    <span class="fold">@{...}</span></div>
<div class="ln" style="top:209px">47</div>
<div class="cl" style="top:208px">    <span class="k">private</span> Integer <span class="f">status</span><span class="c">;</span></div>
<div class="ln" style="top:231px">48</div>
<div class="ln" style="top:253px">49</div>
<div class="foldbg" style="top:251px"></div>
<svg class="abs" style="left:586px;top:256px" width="13" height="13" viewBox="0 0 13 13" fill="none"><g transform="translate(0.7 0.5)"><path d="M4.300 2.400l3.600 3.600-3.600 3.600" stroke="#7F8388" stroke-width="1.100" stroke-linecap="round" stroke-linejoin="round"/></g></svg>
<div class="cl" style="top:252px">    <span class="fold">@{...}</span></div>
<div class="ln" style="top:275px">51</div>
<div class="cl" style="top:274px">    <span class="k">private</span> Long <span class="f">categoryId</span><span class="c">;</span></div>
<div class="ln" style="top:297px">52</div>
<div class="foldbg" style="top:295px"></div>
<svg class="abs" style="left:586px;top:300px" width="13" height="13" viewBox="0 0 13 13" fill="none"><g transform="translate(0.7 0.5)"><path d="M4.300 2.400l3.600 3.600-3.600 3.600" stroke="#7F8388" stroke-width="1.100" stroke-linecap="round" stroke-linejoin="round"/></g></svg>
<div class="cl" style="top:296px">    <span class="fold">@{...}</span></div>
<div class="ln" style="top:319px">54</div>
<div class="cl" style="top:318px">    <span class="k">private</span> String <span class="f">categoryName</span><span class="c">;</span></div>
<div class="ln" style="top:341px">55</div>
<div class="ln" style="top:363px">56</div>
<div class="foldbg" style="top:361px"></div>
<svg class="abs" style="left:586px;top:366px" width="13" height="13" viewBox="0 0 13 13" fill="none"><g transform="translate(0.7 0.5)"><path d="M4.300 2.400l3.600 3.600-3.600 3.600" stroke="#7F8388" stroke-width="1.100" stroke-linecap="round" stroke-linejoin="round"/></g></svg>
<div class="cl" style="top:362px">    <span class="fold">@{...}</span></div>
<div class="ln" style="top:385px">58</div>
<div class="cl" style="top:384px">    <span class="k">private</span> String <span class="f">description</span><span class="c">;</span></div>
<div class="ln" style="top:407px">59</div>
<div class="ln" style="top:429px">60</div>
<div class="cl" style="top:428px">    <span class="a">@Schema</span>(description = <span class="s">&quot;<span class="z">负责人的用户编号</span>&quot;</span><span class="c">,</span> requiredMode = <span class="a">Schema</span>.RequiredMode.<span class="i">REQUIRED</span><span class="c">,</span> example = <span class="s">&quot;31926&quot;</span>)</div>
<div class="ln" style="top:451px">61</div>
<div class="cl" style="top:450px">    <span class="a">@Trans</span>(type = TransType.<span class="i">SIMPLE</span><span class="c">,</span> targetClassName = <span class="s">&quot;cn.iocoder.yudao.module.system.dal.dataobject.user.AdminUserDO&quot;</span><span class="c">,</span></div>
<div class="ln" style="top:473px">62</div>
<div class="cl" style="top:472px">            fields = <span class="s">&quot;nickname&quot;</span><span class="c">,</span> ref = <span class="s">&quot;ownerUserName&quot;</span>)</div>
<div class="ln" style="top:495px">63</div>
<div class="cl" style="top:494px">    <span class="k">private</span> Long <span class="f">ownerUserId</span><span class="c">;</span></div>
<div class="ln" style="top:517px">64</div>
<div class="cl" style="top:516px">    <span class="a">@Schema</span>(description = <span class="s">&quot;<span class="z">负责人的用户昵称</span>&quot;</span><span class="c">,</span> requiredMode = <span class="a">Schema</span>.RequiredMode.<span class="i">REQUIRED</span><span class="c">,</span> example = <span class="s">&quot;<span class="z">芋道源码</span>&quot;</span>)</div>
<div class="ln" style="top:539px">65</div>
<div class="cl" style="top:538px">    <span class="a">@ExcelProperty</span>(<span class="s">&quot;<span class="z">负责人</span>&quot;</span>)</div>
<div class="ln" style="top:561px">66</div>
<div class="cl" style="top:560px">    <span class="k">private</span> String <span class="f">ownerUserName</span><span class="c">;</span></div>
<div class="ln" style="top:583px">67</div>
<div class="ln" style="top:605px">68</div>
<div class="cl" style="top:604px">    <span class="a">@Schema</span>(description = <span class="s">&quot;<span class="z">创建人编号</span>&quot;</span><span class="c">,</span> requiredMode = <span class="a">Schema</span>.RequiredMode.<span class="i">REQUIRED</span><span class="c">,</span> example = <span class="s">&quot;1024&quot;</span>)</div>
<div class="ln" style="top:627px">69</div>
<div class="cl" style="top:626px">    <span class="a">@Trans</span>(type = TransType.<span class="i">SIMPLE</span><span class="c">,</span> targetClassName = <span class="s">&quot;cn.iocoder.yudao.module.system.dal.dataobject.user.AdminUserDO&quot;</span><span class="c">,</span></div>
<svg class="abs" style="left:630px;top:471px" width="4" height="20" viewBox="630 471 4 20"><rect x="631.400" y="471" width="1" height="19" fill="#3b3b3b"/></svg>
<svg class="abs" style="left:618px;top:440px" width="917" height="58" viewBox="618 440 917 58" fill="none"><rect x="623.050" y="446.250" width="910.950" height="45" stroke="#cf2d63" stroke-width="3.300"/></svg>
<svg class="abs" style="left:840px;top:495px" width="160" height="100" viewBox="840 495 160 100" fill="none">
<path d="M977.5 505.100C976.500 512 974 523 970.500 532.300C967 541 962 549 955 554.800C948 560.500 936 566.500 927 569.300C915 572.500 900 574.300 889.700 575C880 575.800 868 576.500 859 578" stroke="#cf2d63" stroke-width="3" stroke-linecap="round" stroke-linejoin="round"/>
<path d="M873.400 562.600L858.300 578.100L877.300 584.300" stroke="#cf2d63" stroke-width="3" stroke-linecap="round" stroke-linejoin="round"/>
</svg>
</div></div>
<div id="gline"></div>
</body>
</html>
